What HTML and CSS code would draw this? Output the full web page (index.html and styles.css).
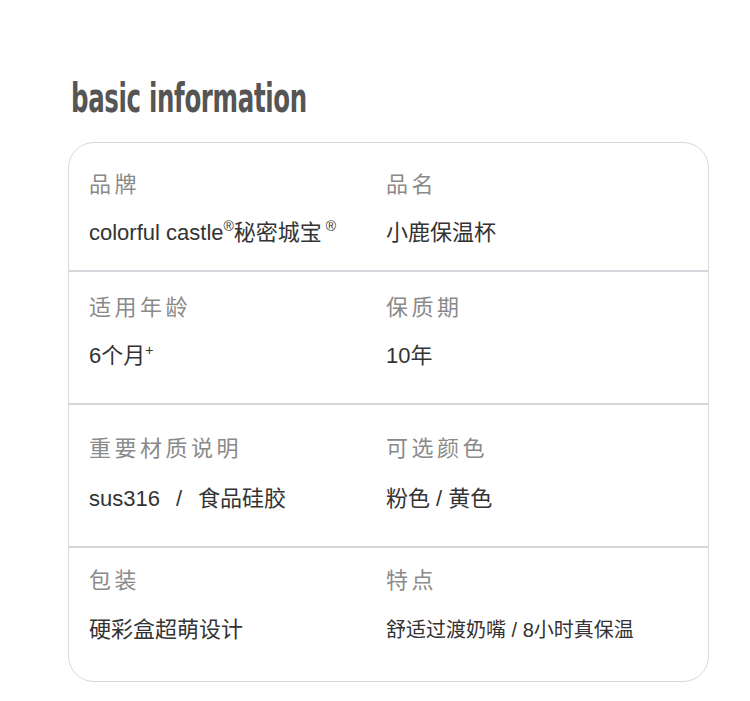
FILE: index.html
```html
<!DOCTYPE html>
<html lang="zh-CN">
<head>
<meta charset="utf-8">
<title>basic information</title>
<link rel="stylesheet" href="styles.css">
</head>
<body>
<main class="page">
  <h1 class="title">basic information</h1>
  <section class="card">
    <div class="row row-1">
      <div class="cell"><div class="label">品牌</div><div class="value">colorful castle<sup class="mark">®</sup>秘密城宝<sup class="mark mark-gap">®</sup></div></div>
      <div class="cell"><div class="label">品名</div><div class="value">小鹿保温杯</div></div>
    </div>
    <div class="row row-2">
      <div class="cell"><div class="label">适用年龄</div><div class="value">6个月<sup class="plus">+</sup></div></div>
      <div class="cell"><div class="label">保质期</div><div class="value">10年</div></div>
    </div>
    <div class="row row-3">
      <div class="cell"><div class="label">重要材质说明</div><div class="value">sus316<span class="sep">/</span>食品硅胶</div></div>
      <div class="cell"><div class="label">可选颜色</div><div class="value">粉色 / 黄色</div></div>
    </div>
    <div class="row row-4">
      <div class="cell"><div class="label">包装</div><div class="value">硬彩盒超萌设计</div></div>
      <div class="cell"><div class="label">特点</div><div class="value value-small">舒适过渡奶嘴 / 8小时真保温</div></div>
    </div>
  </section>
</main>
</body>
</html>
```
FILE: styles.css
```css
* { box-sizing: border-box; }
html, body { margin: 0; padding: 0; background: #ffffff; }
.page {
  width: 750px;
  padding: 77px 0 0 68px;
  font-family: "Liberation Sans", "Noto Sans CJK SC", sans-serif;
}
.title {
  margin: 0 0 23px 3px;
  font-family: "DejaVu Sans Condensed", "DejaVu Sans", sans-serif;
  font-weight: 700;
  font-size: 40px;
  line-height: 42px;
  color: #555555;
  letter-spacing: -0.5px;
  transform: scaleX(0.68);
  transform-origin: left center;
  white-space: nowrap;
}
.card {
  width: 641px;
  border: 1px solid #d9d9d9;
  border-radius: 26px;
  overflow: hidden;
}
.row {
  display: grid;
  grid-template-columns: 297px 1fr;
  padding-left: 20px;
}
.row + .row { border-top: 2px solid #d6d6dc; }
.cell { display: flex; flex-direction: column; gap: 24px; }
.row-1 { padding-top: 27px; padding-bottom: 22px; }
.row-2 { padding-top: 21px; padding-bottom: 32px; }
.row-3 { padding-top: 29px; padding-bottom: 32px; }
.row-3 .cell { gap: 26px; }
.row-4 { padding-top: 18px; padding-bottom: 36px; }
.row-4 .cell { gap: 25px; }
.label {
  font-family: "Noto Sans CJK SC", sans-serif;
  font-size: 22px;
  line-height: 24px;
  letter-spacing: 3.5px;
  color: #8a8a8a;
}
.value {
  font-size: 22px;
  line-height: 30px;
  color: #333333;
  white-space: nowrap;
}
.value-small { font-size: 20px; }
.sep { margin: 0 16px; }
.mark {
  font-size: 14px;
  line-height: 0;
  vertical-align: 0;
  position: relative;
  top: -9px;
}
.mark-gap { margin-left: 4px; }
.plus {
  font-size: 14px;
  line-height: 0;
  position: relative;
  top: -8px;
  vertical-align: 0;
}
```
